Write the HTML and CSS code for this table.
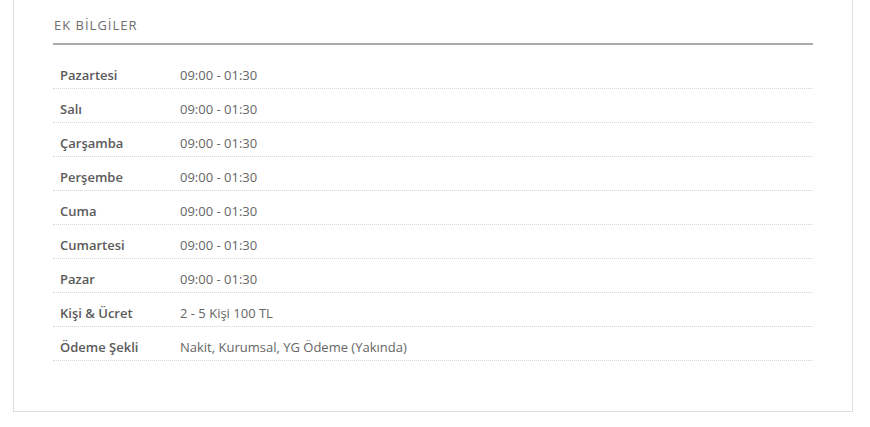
FILE: index.html
```html
<!DOCTYPE html>
<html lang="tr">
<head>
<meta charset="utf-8">
<title>Ek Bilgiler</title>
<link rel="stylesheet" href="styles.css">
</head>
<body>
<div class="card">
  <h3 class="card-title">EK BİLGİLER</h3>
  <ul class="info-list">
    <li class="info-row"><span class="info-label">Pazartesi</span><span class="info-value">09:00 - 01:30</span></li>
    <li class="info-row"><span class="info-label">Salı</span><span class="info-value">09:00 - 01:30</span></li>
    <li class="info-row"><span class="info-label">Çarşamba</span><span class="info-value">09:00 - 01:30</span></li>
    <li class="info-row"><span class="info-label">Perşembe</span><span class="info-value">09:00 - 01:30</span></li>
    <li class="info-row"><span class="info-label">Cuma</span><span class="info-value">09:00 - 01:30</span></li>
    <li class="info-row"><span class="info-label">Cumartesi</span><span class="info-value">09:00 - 01:30</span></li>
    <li class="info-row"><span class="info-label">Pazar</span><span class="info-value">09:00 - 01:30</span></li>
    <li class="info-row"><span class="info-label">Kişi &amp; Ücret</span><span class="info-value">2 - 5 Kişi 100 TL</span></li>
    <li class="info-row"><span class="info-label">Ödeme Şekli</span><span class="info-value">Nakit, Kurumsal, YG Ödeme (Yakında)</span></li>
  </ul>
</div>
</body>
</html>
```
FILE: styles.css
```css
* { box-sizing: border-box; }
html, body { margin: 0; padding: 0; background: #fff; }
body { font-family: "Open Sans", "Liberation Sans", sans-serif; }

.card {
  margin-left: 13px;
  width: 840px;
  border: 1px solid #dddddd;
  border-top: none;
  padding: 0 39px 50px;
}

.card-title {
  margin: 0;
  padding: 16px 0 9px 1px;
  font-size: 13px;
  line-height: 18px;
  font-weight: 400;
  letter-spacing: 1px;
  color: #6e6e6e;
  border-bottom: 2px solid #aaaaaa;
}

.info-list {
  list-style: none;
  margin: 10px 0 0;
  padding: 0;
}

.info-row {
  display: flex;
  padding: 11px 7px 3px;
  font-size: 13px;
  line-height: 19px;
  border-bottom: 1px dotted #d6d6d6;
}

.info-label {
  width: 120px;
  flex: none;
  font-weight: 600;
  color: #5a5a5a;
}

.info-value {
  color: #666;
}
```
